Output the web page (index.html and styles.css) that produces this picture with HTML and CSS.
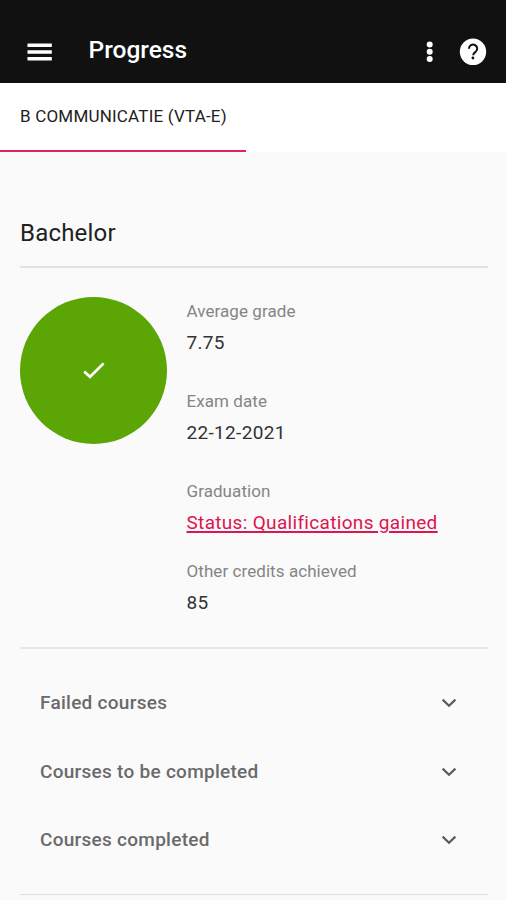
FILE: index.html
```html
<!DOCTYPE html>
<html lang="en">
<head>
  <meta charset="UTF-8" />
  <meta name="viewport" content="width=device-width, initial-scale=1.0"/>
  <title>Progress</title>
  <link rel="stylesheet" href="styles.css">
</head>
<body>

  <header class="toolbar">
    <svg class="menu-icon" width="26" height="20" viewBox="0 0 26 20">
      <path d="M1.5 3.3h24.3M1.5 10h24.3M1.5 16.7h24.3" stroke="#fff" stroke-width="3.5"/>
    </svg>
    <h1 class="toolbar-title">Progress</h1>
    <svg class="more-icon" width="8" height="22" viewBox="0 0 8 22" fill="#fff">
      <circle cx="3.7" cy="3.5" r="3"/>
      <circle cx="3.7" cy="10.8" r="3"/>
      <circle cx="3.7" cy="18.1" r="3"/>
    </svg>
    <svg class="help-icon" width="28" height="28" viewBox="0 0 28 28">
      <circle cx="14" cy="13.8" r="13.2" fill="#fff"/>
      <path d="M10 10.8v-.3a4.1 4 0 1 1 6.8 3.1c-1.8 1.3-2.6 1.9-2.6 3.6" fill="none" stroke="#111" stroke-width="2"/>
      <circle cx="13.9" cy="20" r="1.4" fill="#111"/>
    </svg>
  </header>

  <nav class="tabs">
    <div class="tab active">B COMMUNICATIE (VTA-E)</div>
  </nav>

  <main class="content">
    <h2 class="phase">Bachelor</h2>

    <section class="summary">
      <div class="status-circle">
        <svg width="24" height="20" viewBox="0 0 24 20">
          <path d="M2.2 10.4l5.8 5.4L21.6 2.4" fill="none" stroke="#fff" stroke-width="2.7"/>
        </svg>
      </div>
      <dl class="details">
        <dt>Average grade</dt>
        <dd class="grade">7.75</dd>
        <dt>Exam date</dt>
        <dd>22-12-2021</dd>
        <dt>Graduation</dt>
        <dd class="graduation"><a href="#">Status: Qualifications gained</a></dd>
        <dt>Other credits achieved</dt>
        <dd>85</dd>
      </dl>
    </section>

    <!-- Collapsed course lists -->
    <section class="courses">
      <div class="row">
        <span class="failed">Failed courses</span>
        <svg class="chevron" width="16" height="10" viewBox="0 0 16 10"><path d="M1.6 1.6L8 7.8l6.4-6.2"/></svg>
      </div>
      <div class="row">
        <span>Courses to be completed</span>
        <svg class="chevron" width="16" height="10" viewBox="0 0 16 10"><path d="M1.6 1.6L8 7.8l6.4-6.2"/></svg>
      </div>
      <div class="row">
        <span>Courses completed</span>
        <svg class="chevron" width="16" height="10" viewBox="0 0 16 10"><path d="M1.6 1.6L8 7.8l6.4-6.2"/></svg>
      </div>
    </section>
  </main>

</body>
</html>
```

FILE: styles.css
```css
* {
  box-sizing: border-box;
}

body {
  margin: 0;
  font-family: Roboto, sans-serif;
  background: #fafafa;
  color: #212121;
}

.toolbar {
  display: flex;
  align-items: center;
  height: 83px;
  padding: 20px 19px 0 26px;
  background: #111;
  color: #fff;
}

.toolbar-title {
  flex: 1;
  margin: -3px 0 0 36.5px;
  font-size: 24.5px;
  font-weight: 500;
  line-height: 32px;
}

.help-icon {
  margin-left: 25px;
}

.tabs {
  display: flex;
  height: 69px;
  background: #fff;
}

.tab {
  width: 246px;
  padding-left: 20px;
  font-size: 17px;
  letter-spacing: 0.2px;
  line-height: 66px;
  white-space: nowrap;
}

.tab.active {
  border-bottom: 2px solid #d8285a;
}

.content {
  padding: 64px 18px 0 20px;
}

.phase {
  height: 52px;
  margin: 0;
  border-bottom: 2px solid #e2e2e2;
  font-size: 24px;
  font-weight: 400;
  letter-spacing: 0.2px;
  line-height: 34px;
}

.summary {
  display: flex;
  height: 381px;
  padding-top: 29px;
  border-bottom: 2px solid #e6e6e6;
}

.status-circle {
  display: flex;
  align-items: center;
  justify-content: center;
  width: 147px;
  height: 147px;
  border-radius: 50%;
  background: #5ba505;
}

.details {
  margin: -2px 0 0 19.5px;
  line-height: 32px;
}

.details dt {
  color: #858585;
  font-size: 17px;
  letter-spacing: 0.07px;
}

.details dd {
  margin: 0 0 26px;
  color: #333;
  font-size: 19px;
  letter-spacing: 0.32px;
}

.details .graduation {
  margin-bottom: 16px;
}

.details a {
  color: #dc1450;
  text-decoration-thickness: 2px;
  text-underline-offset: 2px;
}

.courses {
  height: 246px;
  padding: 20px 31px 0 20px;
  border-bottom: 1px solid #dedede;
}

.row {
  display: flex;
  align-items: center;
  justify-content: space-between;
  height: 68.5px;
  color: #6a6a6a;
  font-size: 19px;
  font-weight: 500;
  letter-spacing: 0.27px;
}

.row span {
  margin-top: -1px;
}

.chevron path {
  fill: none;
  stroke: #5c5c5c;
  stroke-width: 2.2;
}
```
